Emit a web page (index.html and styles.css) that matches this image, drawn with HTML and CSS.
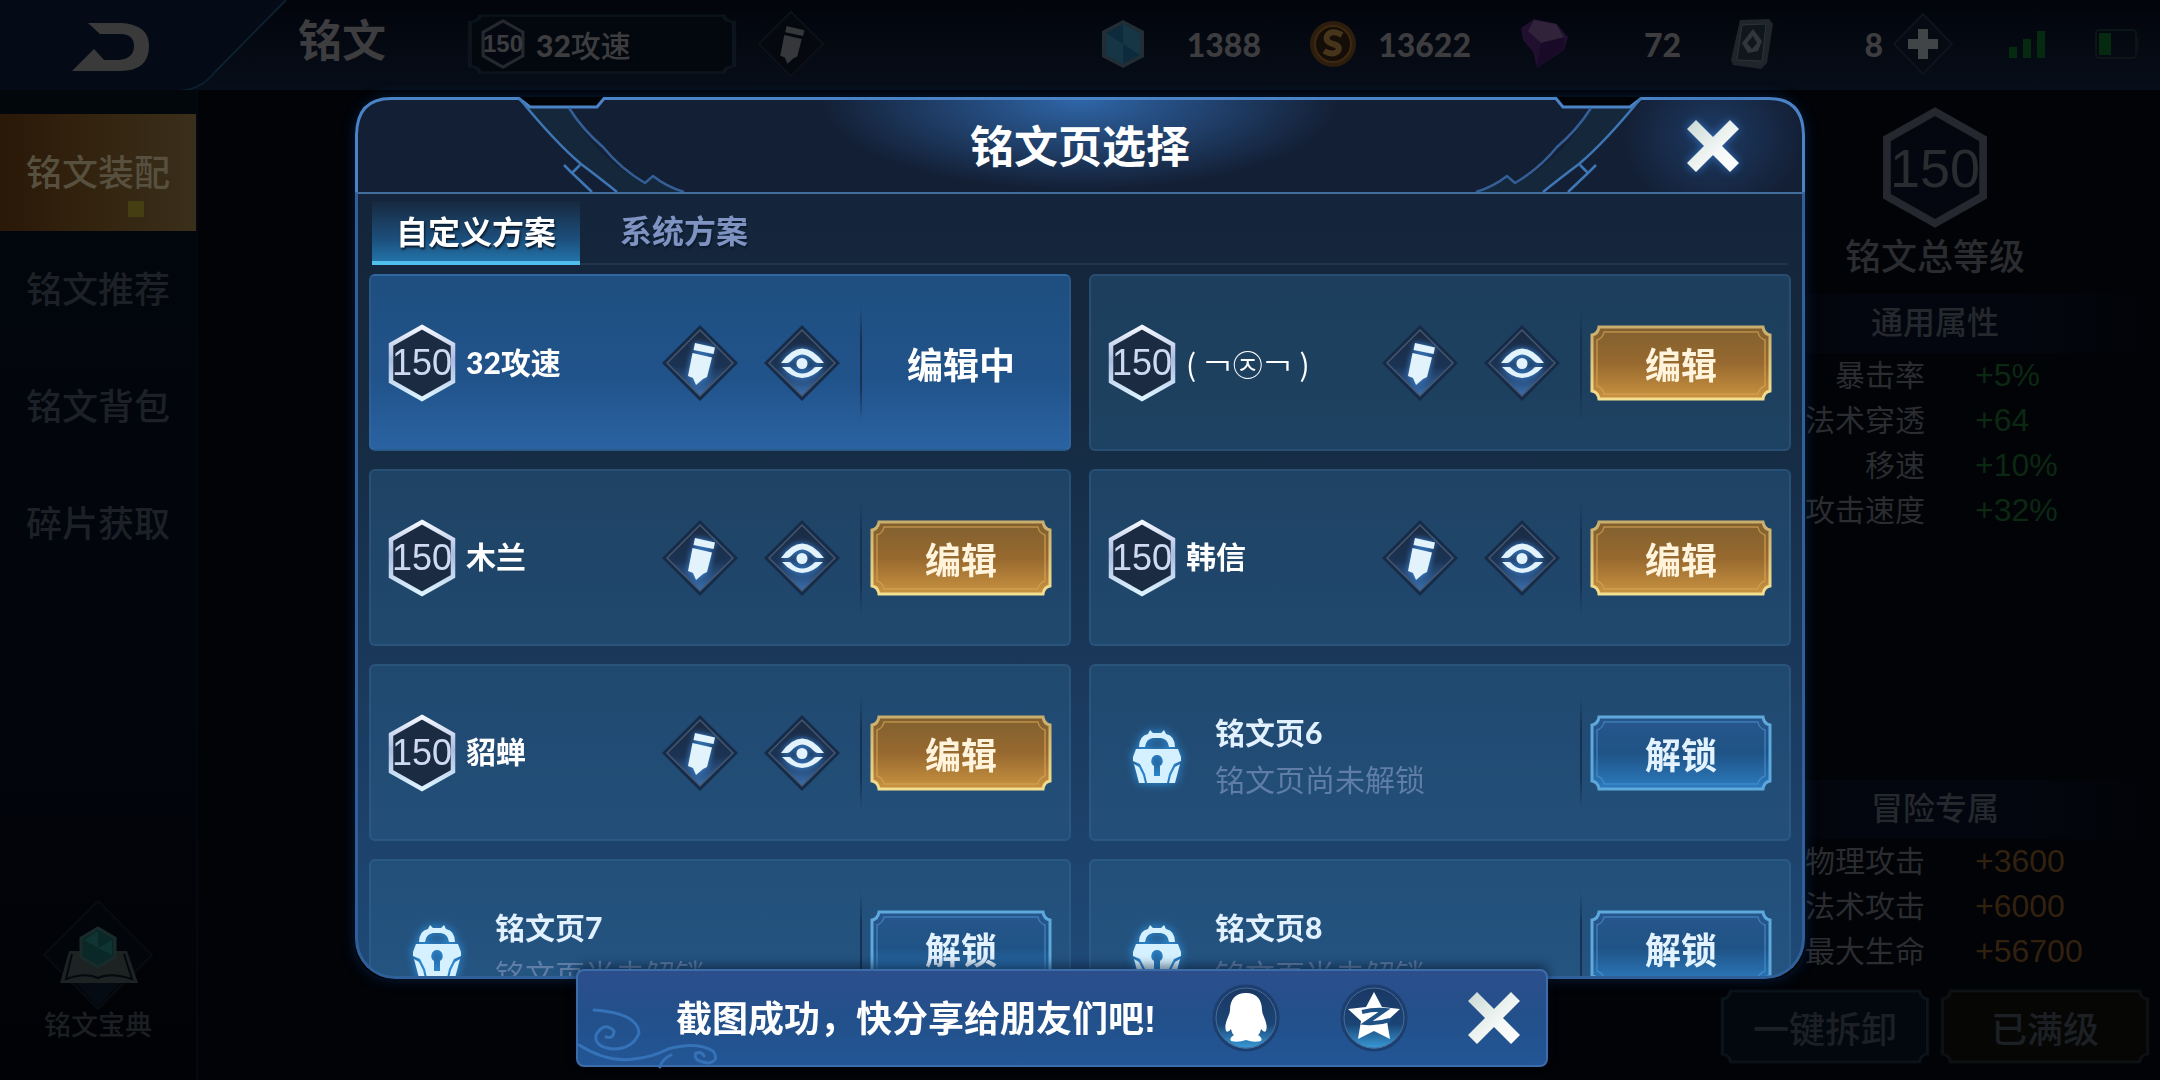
FILE: index.html
```html
<!DOCTYPE html>
<html lang="zh-CN">
<head>
    <meta charset="UTF-8">
    <meta name="viewport" content="width=device-width, initial-scale=1.0">
    <title>铭文</title>
    <link rel="stylesheet" href="styles.css">
</head>
<body>
    <svg class="sprite" aria-hidden="true">
        <defs>
            <linearGradient id="hexLine" x1="0" y1="0" x2="0" y2="1">
                <stop offset="0" stop-color="#f4f7ff"/>
                <stop offset=".45" stop-color="#a9bbe0"/>
                <stop offset="1" stop-color="#dcf3ff"/>
            </linearGradient>
            <linearGradient id="diamondFill" x1="0" y1="0" x2="0" y2="1">
                <stop offset="0" stop-color="#1b2a42"/>
                <stop offset=".55" stop-color="#1b3354"/>
                <stop offset="1" stop-color="#3a70b0"/>
            </linearGradient>
            <linearGradient id="goldFill" x1="0" y1="0" x2="0" y2="1">
                <stop offset="0" stop-color="#80602f"/>
                <stop offset=".5" stop-color="#97692f"/>
                <stop offset="1" stop-color="#c99340"/>
            </linearGradient>
            <linearGradient id="goldLine" x1="0" y1="0" x2="0" y2="1">
                <stop offset="0" stop-color="#c9ad6c"/>
                <stop offset="1" stop-color="#f3df90"/>
            </linearGradient>
            <linearGradient id="blueFill" x1="0" y1="0" x2="0" y2="1">
                <stop offset="0" stop-color="#28568c"/>
                <stop offset=".5" stop-color="#1f5386"/>
                <stop offset="1" stop-color="#2c7cc0"/>
            </linearGradient>
            <linearGradient id="roundFill" x1="0" y1="0" x2="0" y2="1">
                <stop offset="0" stop-color="#1b3763"/>
                <stop offset=".6" stop-color="#1a4474"/>
                <stop offset="1" stop-color="#3aa2e0"/>
            </linearGradient>
            <linearGradient id="crossFill" x1="0" y1="0" x2="1" y2="1">
                <stop offset="0" stop-color="#c9d8d4"/>
                <stop offset=".6" stop-color="#f4f8f6"/>
                <stop offset="1" stop-color="#ffffff"/>
            </linearGradient>
        </defs>
        <symbol id="hex" viewBox="0 0 68 78">
            <path d="M34 3 65 20.500V57.500L34 75 3 57.500V20.500Z" fill="#1b2c42" stroke="url(#hexLine)" stroke-width="4.500"/>
        </symbol>
        <symbol id="hexDim" viewBox="0 0 68 78">
            <path d="M34 3 65 20.500V57.500L34 75 3 57.500V20.500Z" fill="#04070f" stroke="#25282f" stroke-width="5"/>
        </symbol>
        <symbol id="diamond" viewBox="0 0 76 76">
            <path d="M38 0 76 38 38 76 0 38Z" fill="#152b47"/>
            <path d="M38 5 71 38 38 71 5 38Z" fill="url(#diamondFill)" stroke="#45566e" stroke-width="1.500"/>
        </symbol>
        <symbol id="pencil" viewBox="0 0 76 76">
            <path d="M33 18 53 22.500 51.500 29 31.500 25Z"/>
            <path d="M30.500 28 50 32.500 45 52 41 54 34 60 31 53 26 51Z"/>
        </symbol>
        <symbol id="eye" viewBox="0 0 76 76">
            <path d="M17 38Q38 9 60 38H54Q52 38 50 36Q38 23 27 36Q25 38 23 38Z"/>
            <path d="M18 42H25Q27 42 28 44Q38 53 49 44Q50 42 52 42H59Q38 64 18 42Z"/>
            <circle cx="38" cy="38.500" r="5.500"/>
        </symbol>
        <symbol id="lock" viewBox="0 0 48 53">
            <path d="M6 17Q6 6 15 4L17 0 20 3H28L31 0 33 4Q42 6 42 17H36Q35 9 28 8H20Q13 9 12 17Z"/>
            <path fill-rule="evenodd" d="M3 19H45L48 27V31L41 34 36 44 34 53H14L12 44 7 34 0 31V27ZM24 25A6 6 0 0 0 21 36V46H27V36A6 6 0 0 0 24 25Z"/>
            <path d="M1 34 6 37 10 45 12 53H6ZM47 34 42 37 38 45 36 53H42Z"/>
        </symbol>
        <symbol id="cross" viewBox="0 0 52 52">
            <path d="M9 0 26 17 43 0 52 9 35 26 52 43 43 52 26 35 9 52 0 43 17 26 0 9Z" fill="url(#crossFill)"/>
        </symbol>
        <symbol id="frameGold" viewBox="0 0 182 76" preserveAspectRatio="none">
            <path d="M9 2H173Q174 9 180 10V66Q174 67 173 74H9Q8 67 2 66V10Q8 9 9 2Z" fill="url(#goldFill)" stroke="url(#goldLine)" stroke-width="3"/>
            <path d="M14 7H168Q169 13 175 15V61Q169 63 168 69H14Q13 63 7 61V15Q13 13 14 7Z" fill="none" stroke="#d5a457" stroke-width="1.500" opacity=".7"/>
        </symbol>
        <symbol id="frameBlue" viewBox="0 0 182 76" preserveAspectRatio="none">
            <path d="M9 2H173Q174 9 180 10V66Q174 67 173 74H9Q8 67 2 66V10Q8 9 9 2Z" fill="url(#blueFill)" stroke="#5fa8dc" stroke-width="3"/>
            <path d="M14 7H168Q169 13 175 15V61Q169 63 168 69H14Q13 63 7 61V15Q13 13 14 7Z" fill="none" stroke="#4d97d3" stroke-width="1.500" opacity=".6"/>
        </symbol>
        <symbol id="frameDim" viewBox="0 0 182 76" preserveAspectRatio="none">
            <path d="M9 2H173Q174 9 180 10V66Q174 67 173 74H9Q8 67 2 66V10Q8 9 9 2Z" fill="currentColor" stroke="currentColor" stroke-width="1"/>
            <path d="M9 2H173Q174 9 180 10V66Q174 67 173 74H9Q8 67 2 66V10Q8 9 9 2Z" fill="none" stroke="#5f7d90" stroke-opacity=".1" stroke-width="3"/>
        </symbol>
        <symbol id="corner" viewBox="0 0 332 96">
            <path d="M1 96V38Q1 1 36 1H164L175 10H242L250 1H332V96Z" fill="#131f35"/>
            <path d="M164 1 175 10H214Q240 62 290 86L298 79 329 96H262Q215 60 164 1Z" fill="#14273b"/>
            <path d="M1.500 96V38Q2 1.500 36 1.500H164L175 10H242L249 1.500H332" fill="none" stroke="#4a83c6" stroke-width="3"/>
            <path d="M164 1Q200 45 226 67Q246 82 262 95M225 68 217 76M209 68 217 76 237 95" fill="none" stroke="#3f76b4" stroke-width="2.500"/>
            <path d="M214 11Q228 33 248 50Q266 72 290 86L298 79 Q312 90 329 95" fill="none" stroke="#345f96" stroke-width="2.500"/>
        </symbol>
    </svg>

    <div class="page">
        <header class="topbar">
            <button class="back" aria-label="返回">
                <svg class="back-shape" viewBox="0 0 290 92" aria-hidden="true">
                    <path d="M0 0H286L215 72Q200 91 176 91H0Z" fill="#040b16"/>
                    <path d="M286 0 215 72Q200 91 176 91H0" fill="none" stroke="#0c2030" stroke-width="2"/>
                    <path d="M88 23H122Q149 25 149 46Q149 71 120 71H72L94 49 104 60H118Q134 59 134 46Q134 34 120 34H100Z" fill="#3a3a3a"/>
                </svg>
            </button>
            <h1>铭文</h1>
            <button class="picker">
                <svg class="frame dim-blue" aria-hidden="true"><use href="#frameDim"/></svg>
                <span class="level level-small"><svg aria-hidden="true"><use href="#hexDim"/></svg><b>150</b></span>
                <span><b class="num">32</b>攻速</span>
            </button>
            <button class="rename" aria-label="重命名">
                <svg viewBox="0 0 76 76" aria-hidden="true">
                    <path d="M38 2 74 38 38 74 2 38Z" fill="#05080f" stroke="#0d121a" stroke-width="2"/>
                    <use href="#pencil" fill="#35373a"/>
                </svg>
            </button>
            <ul class="resources">
                <li>
                    <svg viewBox="0 0 44 50" aria-hidden="true">
                        <path d="M22 1 43 12V38L22 49 1 38V12Z" fill="#222d34"/>
                        <path d="M22 5 39 14V36L22 45 5 36V14Z" fill="#0d2b3c"/>
                        <path d="M22 5V25L39 36V14ZM5 14 22 25V45L5 36Z" fill="#163646"/>
                    </svg>
                    <span>1388</span>
                </li>
                <li>
                    <svg viewBox="0 0 44 50" aria-hidden="true">
                        <circle cx="22" cy="25" r="23" fill="#2d1d0d"/>
                        <circle cx="22" cy="25" r="18" fill="#150e08" stroke="#3d2913" stroke-width="2"/>
                        <path d="M31 16Q20 10 16 17Q14 23 22 25Q30 27 27 32Q22 37 13 32" fill="none" stroke="#47351b" stroke-width="6"/>
                    </svg>
                    <span>13622</span>
                </li>
                <li>
                    <svg viewBox="0 0 44 50" aria-hidden="true">
                        <path d="M0 9 13 0 36 5 47 18 43 31 16 49 12 33 2 21Z" fill="#200f2f"/>
                        <path d="M13 1 35 5 43 18 20 24 7 12Z" fill="#31243a"/>
                        <path d="M20 24 43 19 42 30 16 48Z" fill="#190a28"/>
                    </svg>
                    <span>72</span>
                </li>
                <li>
                    <svg viewBox="0 0 44 50" aria-hidden="true">
                        <path d="M9 1 38 0 42 5 36 44 30 50 2 46 0 41Z" fill="#20252b"/>
                        <path d="M11 6 35 5 31 42 6 41Z" fill="#10161d" stroke="#2c3238"/>
                        <path d="M22 10 31 22 27 32 17 34 11 24ZM22 17 16 24 21 30 26 24Z" fill="#30363c" fill-rule="evenodd"/>
                    </svg>
                    <span>8</span>
                </li>
            </ul>
            <button class="add" aria-label="增加">
                <svg viewBox="0 0 60 64" aria-hidden="true">
                    <path d="M30 2 59 32 30 62 1 32Z" fill="#060b13" stroke="#0e141c" stroke-width="2"/>
                    <path d="M25 17H35V27H45V37H35V47H25V37H15V27H25Z" fill="#424548"/>
                </svg>
            </button>
            <svg class="signal" viewBox="0 0 36 28" aria-hidden="true">
                <path d="M0 17H8V28H0ZM14 9H22V28H14ZM28 1H36V28H28Z" fill="#062a10"/>
            </svg>
            <svg class="battery" viewBox="0 0 44 30" aria-hidden="true">
                <rect x="1" y="1" width="40" height="28" rx="3" fill="none" stroke="#0b1518" stroke-width="2"/>
                <path d="M4 4H16V26H4Z" fill="#062a10"/>
                <path d="M42 9V21" stroke="#0b1518" stroke-width="3"/>
            </svg>
        </header>

        <div class="content">
            <nav class="sidebar">
                <a href="#" class="side-item active">铭文装配</a>
                <a href="#" class="side-item">铭文推荐</a>
                <a href="#" class="side-item">铭文背包</a>
                <a href="#" class="side-item">碎片获取</a>
                <a href="#" class="book">
                    <svg viewBox="0 0 112 112" aria-hidden="true">
                        <path d="M56 2 110 56 56 110 2 56Z" fill="#020509" stroke="#080c11" stroke-width="2"/>
                        <path d="M32 82H80L56 108Z" fill="#040b13"/>
                        <path d="M27 52H85L96 84H18Z" fill="#1d2223"/>
                        <path d="M30 55 24 80Q44 73 56 79Q68 73 90 80L82 55" fill="none" stroke="#05090d" stroke-width="2"/>
                        <path d="M56 29 73 39V58L56 68 39 58V39Z" fill="#0a2827" stroke="#1a2b2c" stroke-width="3"/>
                        <path d="M56 32V49L42 41ZM56 49 70 41V56Z" fill="#103431"/>
                    </svg>
                    <span>铭文宝典</span>
                </a>
            </nav>

            <aside class="stats">
                <div class="level level-big"><svg aria-hidden="true"><use href="#hexDim"/></svg><b>150</b></div>
                <p class="stats-title">铭文总等级</p>
                <section>
                    <h2>通用属性</h2>
                    <dl class="green">
                        <dt>暴击率</dt><dd>+5%</dd>
                        <dt>法术穿透</dt><dd>+64</dd>
                        <dt>移速</dt><dd>+10%</dd>
                        <dt>攻击速度</dt><dd>+32%</dd>
                    </dl>
                </section>
                <section class="adventure">
                    <h2>冒险专属</h2>
                    <dl class="orange">
                        <dt>物理攻击</dt><dd>+3600</dd>
                        <dt>法术攻击</dt><dd>+6000</dd>
                        <dt>最大生命</dt><dd>+56700</dd>
                    </dl>
                </section>
                <div class="stats-actions">
                    <button><svg class="frame dim-blue" aria-hidden="true"><use href="#frameDim"/></svg><span>一键拆卸</span></button>
                    <button><svg class="frame dim-gold" aria-hidden="true"><use href="#frameDim"/></svg><span>已满级</span></button>
                </div>
            </aside>
        </div>
    </div>

    <div class="overlay">
        <div class="modal" role="dialog" aria-labelledby="modal-title">
            <div class="modal-head">
                <svg class="corner" aria-hidden="true"><use href="#corner"/></svg>
                <h2 id="modal-title">铭文页选择</h2>
                <svg class="corner flip" aria-hidden="true"><use href="#corner"/></svg>
                <button class="close" aria-label="关闭"><svg aria-hidden="true"><use href="#cross"/></svg></button>
            </div>
            <div class="modal-body">
                <div class="tabs" role="tablist">
                    <button class="tab active" role="tab" aria-selected="true">自定义方案</button>
                    <button class="tab" role="tab" aria-selected="false">系统方案</button>
                </div>
                <div class="list">
                    <article class="card current">
                        <span class="level"><svg aria-hidden="true"><use href="#hex"/></svg><b>150</b></span>
                        <h3><b class="num">32</b>攻速</h3>
                        <button class="icon-btn" aria-label="重命名"><svg aria-hidden="true"><use href="#diamond"/><use class="glyph" href="#pencil"/></svg></button>
                        <button class="icon-btn" aria-label="查看"><svg aria-hidden="true"><use href="#diamond"/><use class="glyph" href="#eye"/></svg></button>
                        <div class="action"><span>编辑中</span></div>
                    </article>
                    <article class="card">
                        <span class="level"><svg aria-hidden="true"><use href="#hex"/></svg><b>150</b></span>
                        <h3 class="face">( ￢㉨￢ )</h3>
                        <button class="icon-btn" aria-label="重命名"><svg aria-hidden="true"><use href="#diamond"/><use class="glyph" href="#pencil"/></svg></button>
                        <button class="icon-btn" aria-label="查看"><svg aria-hidden="true"><use href="#diamond"/><use class="glyph" href="#eye"/></svg></button>
                        <div class="action"><button class="btn gold"><svg class="frame" aria-hidden="true"><use href="#frameGold"/></svg><span>编辑</span></button></div>
                    </article>
                    <article class="card">
                        <span class="level"><svg aria-hidden="true"><use href="#hex"/></svg><b>150</b></span>
                        <h3>木兰</h3>
                        <button class="icon-btn" aria-label="重命名"><svg aria-hidden="true"><use href="#diamond"/><use class="glyph" href="#pencil"/></svg></button>
                        <button class="icon-btn" aria-label="查看"><svg aria-hidden="true"><use href="#diamond"/><use class="glyph" href="#eye"/></svg></button>
                        <div class="action"><button class="btn gold"><svg class="frame" aria-hidden="true"><use href="#frameGold"/></svg><span>编辑</span></button></div>
                    </article>
                    <article class="card">
                        <span class="level"><svg aria-hidden="true"><use href="#hex"/></svg><b>150</b></span>
                        <h3>韩信</h3>
                        <button class="icon-btn" aria-label="重命名"><svg aria-hidden="true"><use href="#diamond"/><use class="glyph" href="#pencil"/></svg></button>
                        <button class="icon-btn" aria-label="查看"><svg aria-hidden="true"><use href="#diamond"/><use class="glyph" href="#eye"/></svg></button>
                        <div class="action"><button class="btn gold"><svg class="frame" aria-hidden="true"><use href="#frameGold"/></svg><span>编辑</span></button></div>
                    </article>
                    <article class="card">
                        <span class="level"><svg aria-hidden="true"><use href="#hex"/></svg><b>150</b></span>
                        <h3>貂蝉</h3>
                        <button class="icon-btn" aria-label="重命名"><svg aria-hidden="true"><use href="#diamond"/><use class="glyph" href="#pencil"/></svg></button>
                        <button class="icon-btn" aria-label="查看"><svg aria-hidden="true"><use href="#diamond"/><use class="glyph" href="#eye"/></svg></button>
                        <div class="action"><button class="btn gold"><svg class="frame" aria-hidden="true"><use href="#frameGold"/></svg><span>编辑</span></button></div>
                    </article>
                    <article class="card locked">
                        <svg class="lock" aria-hidden="true"><use href="#lock"/></svg>
                        <div class="locked-text">
                            <h3>铭文页<b class="num">6</b></h3>
                            <p>铭文页尚未解锁</p>
                        </div>
                        <div class="action"><button class="btn"><svg class="frame" aria-hidden="true"><use href="#frameBlue"/></svg><span>解锁</span></button></div>
                    </article>
                    <article class="card locked">
                        <svg class="lock" aria-hidden="true"><use href="#lock"/></svg>
                        <div class="locked-text">
                            <h3>铭文页<b class="num">7</b></h3>
                            <p>铭文页尚未解锁</p>
                        </div>
                        <div class="action"><button class="btn"><svg class="frame" aria-hidden="true"><use href="#frameBlue"/></svg><span>解锁</span></button></div>
                    </article>
                    <article class="card locked">
                        <svg class="lock" aria-hidden="true"><use href="#lock"/></svg>
                        <div class="locked-text">
                            <h3>铭文页<b class="num">8</b></h3>
                            <p>铭文页尚未解锁</p>
                        </div>
                        <div class="action"><button class="btn"><svg class="frame" aria-hidden="true"><use href="#frameBlue"/></svg><span>解锁</span></button></div>
                    </article>
                </div>
            </div>
        </div>
    </div>

    <div class="toast-wrap">
        <div class="toast" role="status">
            <svg class="swirl" viewBox="0 0 140 98" aria-hidden="true">
                <path d="M16 39Q60 42 61 62Q55 78 35 78Q16 76 18 64Q26 50 36 60Q36 68 28 66"/>
                <path d="M1 74Q30 92 56 88Q75 86 90 78Q118 70 135 80Q142 90 130 92Q114 90 118 82Q124 80 126 85M82 96Q84 88 93 84"/>
            </svg>
            <p>截图成功，快分享给朋友们吧!</p>
            <button class="share" aria-label="分享到QQ">
                <svg viewBox="0 0 68 68" aria-hidden="true">
                    <circle cx="34" cy="34" r="32" fill="url(#roundFill)" stroke="#1d3f70" stroke-width="3"/>
                    <circle cx="34" cy="34" r="30" fill="none" stroke="#4a6c98" stroke-width="1"/>
                    <path d="M34 9C45 9 50 16 50 26Q50 29 52 33Q56 42 54 47Q52 49 49 45Q48 50 46 51Q51 54 49 57Q42 59 34 56Q26 59 19 57Q17 54 22 51Q20 50 19 45Q16 49 14 47Q12 42 16 33Q18 29 18 26C18 16 23 9 34 9Z" fill="#fff"/>
                </svg>
            </button>
            <button class="share" aria-label="分享到QQ空间">
                <svg viewBox="0 0 68 68" aria-hidden="true">
                    <circle cx="34" cy="34" r="32" fill="url(#roundFill)" stroke="#1d3f70" stroke-width="3"/>
                    <circle cx="34" cy="34" r="30" fill="none" stroke="#4a6c98" stroke-width="1"/>
                    <path d="M34 8 42 23 60 25 47 37 50 55 34 47 18 55 21 37 8 25 26 23Z" fill="#fff"/>
                    <path d="M22 28Q34 25 45 26L26 39Q38 40 50 36" fill="none" stroke="#1f5184" stroke-width="4"/>
                </svg>
            </button>
            <button class="toast-close" aria-label="关闭"><svg aria-hidden="true"><use href="#cross"/></svg></button>
        </div>
    </div>
</body>
</html>
```

FILE: styles.css
```css
* {
    margin: 0;
    padding: 0;
    box-sizing: border-box;
}
body {
    height: 100vh;
    overflow: hidden;
    font-family: "Liberation Sans", "Noto Sans CJK SC", sans-serif;
    font-weight: 500;
    background-color: #010307;
    color: #2a2c30;
}
button {
    font: inherit;
    color: inherit;
    background: none;
    border: none;
    cursor: pointer;
}
a {
    color: inherit;
    text-decoration: none;
}
svg {
    display: block;
}
.sprite {
    position: absolute;
    width: 0;
    height: 0;
}
.num {
    font-family: Lato, sans-serif;
    font-weight: 900;
}
.frame {
    position: absolute;
    inset: 0;
    width: 100%;
    height: 100%;
}
.frame + span {
    position: relative;
}
.dim-blue {
    color: #03080f;
}
.dim-gold {
    color: #060604;
}

/* level badge */
.level {
    display: grid;
    place-items: center;
    flex: none;
    width: 68px;
    height: 78px;
    color: #cfdaf0;
    font-size: 36px;
}
.level > * {
    grid-area: 1 / 1;
}
.level svg {
    width: 100%;
    height: 100%;
}
.level b {
    font-weight: 400;
}
.level-small {
    width: 46px;
    height: 50px;
    font-size: 24px;
    color: #3a3c40;
}
.level-small b {
    font-weight: 700;
}
.level-big {
    width: 106px;
    height: 121px;
    font-size: 54px;
    color: #2a2c30;
}

/* page behind the dialog */
.page {
    display: flex;
    flex-direction: column;
    height: 100%;
}
.topbar {
    display: flex;
    align-items: center;
    height: 90px;
    padding: 0 21px 2px 0;
    background: linear-gradient(#02040b, #070e19);
    color: #3d3d3f;
}
.back {
    width: 298px;
    align-self: flex-start;
}
.back-shape {
    width: 290px;
    height: 92px;
}
.topbar h1 {
    width: 169px;
    font-size: 44px;
    font-weight: 700;
    line-height: 60px;
    padding-bottom: 4px;
}
.picker {
    position: relative;
    display: flex;
    align-items: center;
    gap: 10px;
    width: 270px;
    height: 60px;
    padding-left: 13px;
    font-size: 30px;
}
.picker > span:last-child {
    position: relative;
}
.picker .level {
    position: relative;
}
.rename {
    margin-left: 20px;
}
.rename svg {
    width: 68px;
    height: 68px;
}
.resources {
    display: flex;
    gap: 50px;
    margin-left: auto;
    list-style: none;
    font-family: Lato, sans-serif;
    font-size: 32px;
    font-weight: 900;
}
.resources li {
    display: flex;
    align-items: center;
    justify-content: space-between;
    width: 160px;
}
.resources li:last-child {
    width: 152px;
    margin-right: 10px;
}
.resources svg {
    width: 44px;
    height: 50px;
    overflow: visible;
}
.add svg {
    width: 60px;
    height: 64px;
}
.signal {
    width: 36px;
    height: 28px;
    margin: 0 50px 0 56px;
}
.battery {
    width: 44px;
    height: 30px;
}
.content {
    display: flex;
    justify-content: space-between;
    flex: 1;
    min-height: 0;
}
.sidebar {
    display: flex;
    flex-direction: column;
    width: 198px;
    padding: 24px 0 39px;
    border-right: 2px solid #04080f;
    background: linear-gradient(#02070c, #02050c 60%, #010205);
}
.side-item {
    position: relative;
    display: flex;
    align-items: center;
    justify-content: center;
    height: 117px;
    padding-bottom: 5px;
    font-size: 36px;
    color: #1d2127;
}
.side-item.active {
    background: linear-gradient(90deg, #2a1808, #33240f 50%, #3a2f1b);
    color: #57503f;
}
.side-item.active::after {
    content: "";
    position: absolute;
    right: 52px;
    bottom: 14px;
    width: 16px;
    height: 16px;
    background-color: #453e12;
}
.book {
    display: flex;
    flex-direction: column;
    align-items: center;
    margin-top: auto;
    font-size: 27px;
    line-height: 30px;
    color: #1c1f22;
}
.book svg {
    width: 112px;
    height: 112px;
}
.stats {
    display: flex;
    flex-direction: column;
    align-items: center;
    width: 450px;
    padding: 17px 10px 16px;
}
.stats-title {
    margin-bottom: 6px;
    font-size: 36px;
    line-height: 60px;
}
.stats section {
    width: 100%;
}
.stats h2 {
    font-size: 32px;
    font-weight: 500;
    line-height: 59px;
    text-align: center;
    color: #25282d;
    background: linear-gradient(90deg, transparent, #03060e 30%, #03060e 70%, transparent);
}
.stats dl {
    display: grid;
    grid-template-columns: 205px 1fr;
    column-gap: 50px;
    font-size: 30px;
    font-weight: 400;
    line-height: 45px;
}
.stats dt {
    text-align: right;
    white-space: nowrap;
}
.stats dd {
    font-size: 32px;
}
.stats .green dd {
    color: #0b2813;
}
.stats .orange dd {
    color: #33210f;
}
.adventure {
    margin: auto 0 15px;
}
.stats-actions {
    display: flex;
    gap: 10px;
    width: 100%;
}
.stats-actions button {
    position: relative;
    flex: 1;
    height: 75px;
    font-size: 36px;
    color: #1c2025;
}

/* dialog */
.overlay {
    position: fixed;
    inset: 0;
    display: flex;
    justify-content: center;
    padding: 97px 355px 101px;
}
.modal {
    display: flex;
    flex-direction: column;
    flex: 1;
    border-radius: 36px;
    box-shadow: 0 0 14px rgba(20, 70, 140, 0.4);
    color: #fff;
}
.modal-head {
    position: relative;
    display: flex;
    height: 95px;
}
.modal-head h2 {
    flex: 1;
    border-top: 3px solid #4a83c6;
    background: radial-gradient(ellipse 260px 90px at 50% 0, #2f66a8, transparent), #131f35;
    font-size: 44px;
    font-weight: 700;
    line-height: 96px;
    text-align: center;
}
.corner {
    width: 332px;
    height: 96px;
}
.corner.flip {
    transform: scaleX(-1);
}
.close {
    position: absolute;
    top: 0;
    right: 0;
    display: grid;
    place-items: center;
    width: 184px;
    height: 98px;
    background: radial-gradient(ellipse 90px 80px at 50% 40%, rgba(45, 100, 170, 0.4), transparent);
}
.close svg,
.toast-close svg {
    width: 52px;
    height: 52px;
}
.close svg {
    filter: drop-shadow(0 0 4px #2f6cb8);
}
.modal-body {
    position: relative;
    display: flex;
    flex-direction: column;
    flex: 1;
    min-height: 0;
    padding: 7px 12px 0;
    border: 3px solid #2f609a;
    border-top: 2px solid #446f9d;
    border-radius: 0 0 40px 40px;
    background: linear-gradient(#14253b, #15293f 25%, #1b3c62 70%, #1f4a78);
    overflow: hidden;
}
.tabs {
    display: flex;
    flex: none;
    height: 64px;
    margin: 0 2px 9px;
    border-bottom: 2px solid #22344a;
}
.tab {
    padding: 0 24px;
    font-size: 32px;
    font-weight: 700;
    line-height: 62px;
    color: #7f93c2;
    text-shadow: 1px 2px 2px #0b1a2c;
}
.tab + .tab {
    margin-left: 16px;
}
.tab.active {
    margin-bottom: -2px;
    color: #fff;
    background: linear-gradient(#17293f, #1c4f7c 60%, #2479b0);
    box-shadow: inset 0 -4px #50bfee;
}
.list {
    display: grid;
    grid-template-columns: 1fr 1fr;
    grid-auto-rows: 177px;
    gap: 18px;
    flex: 1;
    min-height: 0;
    margin: 0 -1px;
    overflow: hidden;
}
.card {
    display: flex;
    align-items: center;
    padding: 0 17px;
    border: 2px solid rgba(70, 120, 165, 0.25);
    border-radius: 6px;
    background-color: rgba(42, 98, 140, 0.42);
}
.card.current {
    background: linear-gradient(#1f4f80, #21538b 60%, #2a63a2);
}
.card h3 {
    flex: 1;
    padding-left: 10px;
    font-size: 30px;
    font-weight: 700;
    line-height: 40px;
}
.card .face {
    font-family: "Noto Sans CJK KR", sans-serif;
    font-weight: 400;
    white-space: pre;
}
.icon-btn {
    margin-right: 26px;
}
.icon-btn svg {
    width: 76px;
    height: 76px;
}
.icon-btn + .icon-btn {
    margin-right: 20px;
}
.glyph {
    fill: #e3f3fb;
    filter: drop-shadow(0 0 3px #3f8ce0);
}
.action {
    display: flex;
    align-items: center;
    justify-content: center;
    width: 192px;
    height: 112px;
    padding-left: 8px;
    border-left: 2px solid;
    border-image: linear-gradient(transparent, #173150 30%, #173150 70%, transparent) 1;
    font-size: 36px;
    font-weight: 700;
}
.btn {
    position: relative;
    width: 182px;
    height: 76px;
    color: #e2f2ff;
}
.btn.gold {
    color: #fff3dc;
}
.lock {
    width: 48px;
    height: 53px;
    margin: 8px 34px 0 25px;
    fill: #d5f1ff;
    filter: drop-shadow(0 0 5px #2f9cf0);
}
.card.locked h3 {
    padding-left: 0;
    color: #e2f1ff;
}
.locked-text {
    flex: 1;
}
.locked-text p {
    margin-top: 7px;
    font-size: 30px;
    font-weight: 400;
    line-height: 40px;
    color: #5f7da6;
}
.locked-text {
    padding-top: 8px;
}

/* share toast */
.toast-wrap {
    position: fixed;
    left: 0;
    right: 0;
    bottom: 13px;
    display: flex;
    justify-content: center;
    padding-right: 36px;
}
.toast {
    position: relative;
    display: flex;
    align-items: center;
    width: 972px;
    height: 98px;
    padding: 0 26px 0 98px;
    border: 2px solid #3d6cab;
    border-radius: 8px;
    background: linear-gradient(#2c4f8c, #22508a 50%, #235696);
    box-shadow: 0 -4px 10px rgba(5, 15, 35, 0.5);
    color: #fff;
}
.toast p {
    flex: 1;
    padding-bottom: 4px;
    font-size: 36px;
    font-weight: 700;
    white-space: nowrap;
}
.swirl {
    position: absolute;
    left: 0;
    top: 0;
    width: 140px;
    height: 98px;
    fill: none;
    stroke: #3572b8;
    stroke-width: 3;
    stroke-linecap: round;
}
.share {
    margin-right: 60px;
}
.share svg {
    width: 68px;
    height: 68px;
}
```
